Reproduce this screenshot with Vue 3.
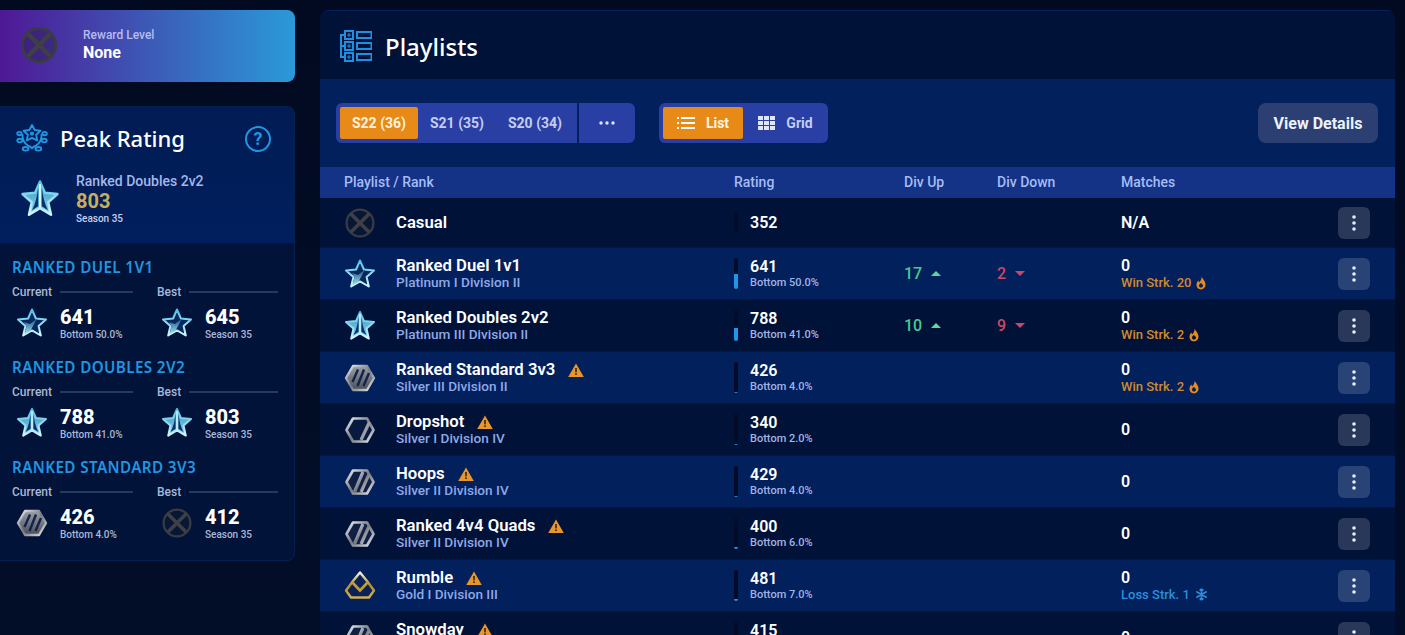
<script setup>
const seasons = ['S22 (36)', 'S21 (35)', 'S20 (34)']

const peakGroups = [
  {
    title: 'Ranked Duel 1v1',
    current: { icon: 'star', value: 641, sub: 'Bottom 50.0%' },
    best: { icon: 'star', value: 645, sub: 'Season 35' }
  },
  {
    title: 'Ranked Doubles 2v2',
    current: { icon: 'spire', value: 788, sub: 'Bottom 41.0%' },
    best: { icon: 'spire', value: 803, sub: 'Season 35' }
  },
  {
    title: 'Ranked Standard 3v3',
    current: { icon: 'silver3', value: 426, sub: 'Bottom 4.0%' },
    best: { icon: 'unranked', value: 412, sub: 'Season 35' }
  }
]

const rows = [
  { name: 'Casual', icon: 'unranked', rating: 352, matches: 'N/A' },
  { name: 'Ranked Duel 1v1', rank: 'Platinum I Division II', icon: 'star', rating: 641, pct: 50, up: 17, down: 2, matches: 0, streak: 'Win Strk. 20', fire: true },
  { name: 'Ranked Doubles 2v2', rank: 'Platinum III Division II', icon: 'spire', rating: 788, pct: 41, up: 10, down: 9, matches: 0, streak: 'Win Strk. 2', fire: true },
  { name: 'Ranked Standard 3v3', rank: 'Silver III Division II', icon: 'silver3', rating: 426, pct: 4, warn: true, matches: 0, streak: 'Win Strk. 2', fire: true },
  { name: 'Dropshot', rank: 'Silver I Division IV', icon: 'silver1', rating: 340, pct: 2, warn: true, matches: 0 },
  { name: 'Hoops', rank: 'Silver II Division IV', icon: 'silver2', rating: 429, pct: 4, warn: true, matches: 0 },
  { name: 'Ranked 4v4 Quads', rank: 'Silver II Division IV', icon: 'silver2', rating: 400, pct: 6, warn: true, matches: 0 },
  { name: 'Rumble', rank: 'Gold I Division III', icon: 'gold', rating: 481, pct: 7, warn: true, matches: 0, streak: 'Loss Strk. 1', fire: false },
  { name: 'Snowday', rank: 'Silver II Division IV', icon: 'silver2', rating: 415, pct: 4, warn: true, matches: 0 }
]
</script>

<template>
  <div class="page">
    <svg class="defs" width="0" height="0">
      <defs>
        <linearGradient id="gPlat" x1="0" y1="0" x2="0" y2="1">
          <stop offset="0" stop-color="#4fc0e6" />
          <stop offset="1" stop-color="#d2f6ff" />
        </linearGradient>
        <linearGradient id="gPlatFill" x1="0" y1="0" x2="0" y2="1">
          <stop offset="0" stop-color="#14507f" />
          <stop offset="1" stop-color="#a9e6f6" />
        </linearGradient>
        <linearGradient id="gSpireFill" x1="0" y1="0" x2="0" y2="1">
          <stop offset="0" stop-color="#2f8fbd" />
          <stop offset="1" stop-color="#8fdcf0" />
        </linearGradient>
        <linearGradient id="gSilver" x1="0" y1="0" x2="1" y2="1">
          <stop offset="0" stop-color="#f0f2f6" />
          <stop offset="0.5" stop-color="#74787f" />
          <stop offset="1" stop-color="#e4e6ea" />
        </linearGradient>
        <linearGradient id="gSilverFill" x1="0" y1="0" x2="0" y2="1">
          <stop offset="0" stop-color="#9a9ea6" />
          <stop offset="1" stop-color="#4b4f5a" />
        </linearGradient>
        <linearGradient id="gGold" x1="0" y1="0" x2="0" y2="1">
          <stop offset="0" stop-color="#f4f2e8" />
          <stop offset="0.5" stop-color="#b8902a" />
          <stop offset="1" stop-color="#d1ae52" />
        </linearGradient>
        <symbol id="unranked" viewBox="0 0 32 32">
          <circle cx="16" cy="16" r="13.4" fill="#1b2130" fill-opacity="0.3" stroke="#3a3c43" stroke-width="2.2" />
          <path d="M7 7 L25 25 M25 7 L7 25" stroke="#3f3f46" stroke-width="3.6" />
        </symbol>
        <symbol id="star" viewBox="0 0 32 32">
          <path d="M16 2.5 L19.9 11.5 L30 12.5 L22.6 19 L24.8 28.5 L16 23.4 L7.2 28.5 L9.4 19 L2 12.5 L12.1 11.5 Z" fill="#08275e" stroke="url(#gPlat)" stroke-width="2" stroke-linejoin="round" />
          <path d="M8.6 27.4 L10.4 19.2 L8 15 L14 17 L21 11.5 L15 22.8 Z" fill="url(#gPlatFill)" />
        </symbol>
        <symbol id="spire" viewBox="0 0 32 32">
          <path d="M16 2 L19.9 11 L30 12 L22.6 18.6 L24.8 28.6 L16 23.4 L7.2 28.6 L9.4 18.6 L2 12 L12.1 11 Z" fill="url(#gSpireFill)" stroke="url(#gPlat)" stroke-width="2" stroke-linejoin="round" />
          <path d="M14.4 7 C14 13 12.6 19 9.6 25 L14.6 21.8 Z M17.6 7 C18 13 19.4 19 22.4 25 L17.4 21.8 Z" fill="#0a2f68" />
          <path d="M16 4 V23" stroke="#d2f6ff" stroke-width="1.6" />
        </symbol>
        <symbol id="silver3" viewBox="0 0 32 32">
          <path d="M9 4 H23 L30 16 L23 28 H9 L2 16 Z" fill="url(#gSilverFill)" stroke="url(#gSilver)" stroke-width="2.4" stroke-linejoin="round" />
          <path d="M8.5 20 L14 7.5 M13.5 24 L20 7.5 M19.5 24 L25 11" stroke="#14234a" stroke-width="2.4" />
        </symbol>
        <symbol id="silver2" viewBox="0 0 32 32">
          <path d="M9 4.5 H23 L29.5 16 L23 27.5 H9 L2.5 16 Z" fill="#0f1f46" stroke="url(#gSilver)" stroke-width="2.6" stroke-linejoin="round" />
          <path d="M10.5 26 L19 6 M17 26 L25 8" stroke="url(#gSilver)" stroke-width="3.2" />
        </symbol>
        <symbol id="silver1" viewBox="0 0 32 32">
          <path d="M9 4.5 H23 L29.5 16 L23 27.5 H9 L2.5 16 Z" fill="#081a40" stroke="url(#gSilver)" stroke-width="2.6" stroke-linejoin="round" />
          <path d="M17 26 L25.5 8" stroke="#9a9ea6" stroke-width="3.2" />
        </symbol>
        <symbol id="gold" viewBox="0 0 32 32">
          <path d="M16 2.5 L23 11 L30 20.5 L25 27.5 H7 L2 20.5 L9 11 Z" fill="#0b2258" stroke="url(#gGold)" stroke-width="2.4" stroke-linejoin="round" />
          <path d="M8 12 L16 20.5 L24 12" fill="none" stroke="#c29c38" stroke-width="2.6" />
        </symbol>
        <symbol id="warn" viewBox="0 0 16 14">
          <path d="M8 0.5 L15.8 14 H0.2 Z" fill="#e8962c" />
          <rect x="7.2" y="5" width="1.6" height="4.4" fill="#33230f" />
          <rect x="7.2" y="10.4" width="1.6" height="1.6" fill="#33230f" />
        </symbol>
        <symbol id="flame" viewBox="0 0 10 14">
          <path d="M5.8 0.5 C6.2 3 9.5 4.6 9.5 8.6 C9.5 11.4 7.6 13.5 5 13.5 C2.4 13.5 0.5 11.4 0.5 8.8 C0.5 6.8 1.4 5.4 2.4 4.4 L3 6.6 C4.4 5.4 5.8 3 5.8 0.5 Z M5 7 C3.8 7.8 3 8.6 3 9.8 C3 10.9 3.9 11.6 5 11.6 C6.1 11.6 7 10.9 7 9.8 C7 8.6 5.8 8 5 7 Z" fill="#e58a1f" fill-rule="evenodd" />
        </symbol>
      </defs>
    </svg>

    <aside class="side">
      <div class="reward">
        <svg class="reward-icon"><use href="#unranked" /></svg>
        <div>
          <div class="reward-label">Reward Level</div>
          <div class="reward-value">None</div>
        </div>
      </div>

      <section class="peak">
        <div class="peak-top">
          <div class="peak-head">
            <svg class="laurel" viewBox="0 0 32 28" fill="none" stroke="#2196e0" stroke-width="1.9" stroke-linejoin="round">
              <path d="M16 1 L18.6 6 L24.4 6.8 L20.2 10.8 L21.2 16.4 L16 13.8 L10.8 16.4 L11.8 10.8 L7.6 6.8 L13.4 6 Z" />
              <circle cx="16" cy="9.6" r="1.2" />
              <path d="M6.5 10 C6 15 8 19 12 21.5 C14 22.6 15.4 23.2 16 24.4 C16.6 23.2 18 22.6 20 21.5 C24 19 26 15 25.5 10" />
              <ellipse cx="3.4" cy="9.6" rx="2.2" ry="1.7" />
              <ellipse cx="28.6" cy="9.6" rx="2.2" ry="1.7" />
              <ellipse cx="3.8" cy="16.6" rx="2.5" ry="1.8" />
              <ellipse cx="28.2" cy="16.6" rx="2.5" ry="1.8" />
              <ellipse cx="9.6" cy="24.8" rx="2.9" ry="1.8" />
              <ellipse cx="22.4" cy="24.8" rx="2.9" ry="1.8" />
            </svg>
            <h2 class="peak-title">Peak Rating</h2>
            <span class="help">?</span>
          </div>
          <div class="peak-main">
            <svg class="peak-star"><use href="#spire" /></svg>
            <div>
              <div class="peak-name">Ranked Doubles 2v2</div>
              <div class="peak-value">803</div>
              <div class="peak-season">Season 35</div>
            </div>
          </div>
        </div>

        <div class="peak-list">
          <div v-for="g in peakGroups" :key="g.title" class="peak-group">
            <h3 class="group-title">{{ g.title }}</h3>
            <div class="group-cols">
              <div v-for="(item, label) in { Current: g.current, Best: g.best }" :key="label" class="group-col">
                <div class="col-label"><span>{{ label }}</span><i></i></div>
                <div class="col-body">
                  <svg class="col-icon"><use :href="'#' + item.icon" /></svg>
                  <div>
                    <div class="col-value">{{ item.value }}</div>
                    <div class="col-sub">{{ item.sub }}</div>
                  </div>
                </div>
              </div>
            </div>
          </div>
        </div>
      </section>
    </aside>

    <main class="panel">
      <header class="panel-head">
        <svg class="panel-icon" viewBox="0 0 32 32" fill="none" stroke="#1f8fe0" stroke-width="2">
          <rect x="5" y="1" width="8" height="8" />
          <rect x="5" y="12" width="8" height="8" />
          <rect x="5" y="23" width="8" height="8" />
          <rect x="17" y="2" width="14.5" height="6" />
          <rect x="17" y="13" width="14.5" height="6" />
          <rect x="17" y="24" width="14.5" height="6" />
          <path d="M5 5 H1 V27 H5 M1 16 H5" />
          <path d="M8 4 h2 v2 H8 Z M8 15 h2 v2 H8 Z M8 26 h2 v2 H8 Z" stroke-width="1" />
        </svg>
        <h1 class="panel-title">Playlists</h1>
      </header>

      <div class="toolbar">
        <div class="seg">
          <button v-for="(s, i) in seasons" :key="s" class="seg-btn" :class="{ active: i === 0 }">{{ s }}</button>
          <span class="seg-split"></span>
          <button class="seg-more">
            <svg width="16" height="4" viewBox="0 0 16 4" fill="#dfe6fb">
              <circle cx="2" cy="2" r="1.7" /><circle cx="8" cy="2" r="1.7" /><circle cx="14" cy="2" r="1.7" />
            </svg>
          </button>
        </div>
        <div class="seg view">
          <button class="view-btn active">
            <svg width="18" height="12" viewBox="0 0 18 12" fill="#fff">
              <rect x="0" y="0" width="2" height="2" /><rect x="4" y="0" width="14" height="2" />
              <rect x="0" y="5" width="2" height="2" /><rect x="4" y="5" width="14" height="2" />
              <rect x="0" y="10" width="2" height="2" /><rect x="4" y="10" width="14" height="2" />
            </svg>
            List
          </button>
          <button class="view-btn">
            <svg width="17" height="14" viewBox="0 0 17 14" fill="#dfe6fb">
              <rect x="0" y="0" width="5" height="4" /><rect x="6" y="0" width="5" height="4" /><rect x="12" y="0" width="5" height="4" />
              <rect x="0" y="5" width="5" height="4" /><rect x="6" y="5" width="5" height="4" /><rect x="12" y="5" width="5" height="4" />
              <rect x="0" y="10" width="5" height="4" /><rect x="6" y="10" width="5" height="4" /><rect x="12" y="10" width="5" height="4" />
            </svg>
            Grid
          </button>
        </div>
        <button class="details">View Details</button>
      </div>

      <div class="row thead">
        <span>Playlist / Rank</span>
        <span>Rating</span>
        <span>Div Up</span>
        <span>Div Down</span>
        <span>Matches</span>
      </div>

      <div v-for="(r, i) in rows" :key="r.name" class="row item" :class="{ alt: i % 2 === 1, first: i === 0 }">
        <div class="cell-name">
          <svg class="rank-icon"><use :href="'#' + r.icon" /></svg>
          <div>
            <div class="name">
              {{ r.name }}
              <svg v-if="r.warn" class="warn"><use href="#warn" /></svg>
            </div>
            <div v-if="r.rank" class="rank">{{ r.rank }}</div>
          </div>
        </div>
        <div class="cell-rating">
          <div class="bar" :class="{ short: !r.rank }">
            <div class="bar-fill" :style="{ height: (r.pct || 0) + '%' }"></div>
          </div>
          <div>
            <div class="value">{{ r.rating }}</div>
            <div v-if="r.pct" class="pct">Bottom {{ r.pct }}.0%</div>
          </div>
        </div>
        <div class="div-up"><template v-if="r.up">{{ r.up }}<i class="tri-up"></i></template></div>
        <div class="div-down"><template v-if="r.down">{{ r.down }}<i class="tri-down"></i></template></div>
        <div>
          <div class="value">{{ r.matches }}</div>
          <div v-if="r.streak" class="streak" :class="{ loss: !r.fire }">
            {{ r.streak }}
            <svg v-if="r.fire" class="flame"><use href="#flame" /></svg>
            <svg v-else class="flake" viewBox="0 0 14 14" fill="none" stroke="#2a8fdc" stroke-width="1.7">
              <path d="M7 0.5 V13.5 M1.4 3.8 L12.6 10.2 M12.6 3.8 L1.4 10.2 M5 1.5 L7 3.5 L9 1.5 M5 12.5 L7 10.5 L9 12.5" />
            </svg>
          </div>
        </div>
        <button class="kebab">
          <svg width="4" height="16" viewBox="0 0 4 16" fill="#e6ecfb">
            <circle cx="2" cy="2" r="1.8" /><circle cx="2" cy="8" r="1.8" /><circle cx="2" cy="14" r="1.8" />
          </svg>
        </button>
      </div>
    </main>
  </div>
</template>

<style>
html,
body {
  background: #020b22;
  overflow: hidden;
}
</style>

<style scoped>
.page {
  display: flex;
  align-items: flex-start;
  gap: 25px;
  height: 635px;
  padding-top: 10px;
  box-sizing: border-box;
  overflow: hidden;
  background: linear-gradient(#010a20, #020d28);
  font-family: Roboto, "Liberation Sans", sans-serif;
  color: #fff;
}

.defs {
  position: absolute;
}

button {
  border: none;
  font-family: inherit;
  cursor: pointer;
}

.side {
  flex: 0 0 295px;
  display: flex;
  flex-direction: column;
  gap: 24px;
}

.reward {
  height: 72px;
  display: flex;
  align-items: center;
  gap: 24px;
  padding: 0 0 2px 19px;
  box-sizing: border-box;
  border-radius: 0 8px 8px 0;
  background: linear-gradient(90deg, #4f1895, #2a9ad8);
}

.reward-icon {
  width: 40px;
  height: 40px;
}

.reward-label {
  font-size: 12px;
  line-height: 15px;
  font-weight: 500;
  color: #b4bdf0;
}

.reward-value {
  font-size: 16px;
  line-height: 20px;
  font-weight: 700;
}

.peak {
  border-radius: 0 8px 8px 0;
  overflow: hidden;
  background: #011338;
  border: 1px solid #04204f;
  border-left: none;
}

.peak-top {
  height: 136px;
  box-sizing: border-box;
  padding: 16px 20px 0 16px;
  background: linear-gradient(#011c54, #011f5e);
}

.peak-head {
  display: flex;
  align-items: center;
  gap: 12px;
}

.laurel {
  width: 32px;
  height: 28px;
}

.peak-title {
  margin: 1px 0 0;
  flex: 1;
  font-family: "Noto Sans", sans-serif;
  font-size: 22px;
  line-height: 28px;
  font-weight: 500;
}

.help {
  width: 22px;
  height: 22px;
  border: 2.5px solid #2196e0;
  border-radius: 50%;
  margin: 2px 3px 0 0;
  display: flex;
  align-items: center;
  justify-content: center;
  color: #2196e0;
  font-size: 18px;
  font-weight: 700;
}

.peak-main {
  display: flex;
  align-items: center;
  gap: 16px;
  margin: 21px 0 0 4px;
}

.peak-star {
  width: 40px;
  height: 40px;
}

.peak-name {
  font-size: 14px;
  line-height: 16px;
  font-weight: 500;
  color: #a3b8e8;
}

.peak-value {
  font-size: 20px;
  line-height: 24px;
  font-weight: 700;
  color: #c9ae5d;
}

.peak-season {
  font-size: 10px;
  line-height: 12px;
  font-weight: 500;
  color: #c4d0ee;
}

.peak-list {
  padding: 14px 16px 19px 12px;
  display: flex;
  flex-direction: column;
  gap: 16px;
}

.group-title {
  margin: 0 0 7px;
  font-family: "Noto Sans", sans-serif;
  font-size: 15.2px;
  line-height: 20px;
  font-weight: 600;
  letter-spacing: 0.4px;
  text-transform: uppercase;
  color: #2196e0;
}

.group-cols {
  display: grid;
  grid-template-columns: 121px 121px;
  gap: 24px;
}

.col-label {
  display: flex;
  align-items: center;
  gap: 8px;
  font-size: 12px;
  line-height: 16px;
  font-weight: 500;
  color: #a8b8d8;
}

.col-label i {
  flex: 1;
  height: 2px;
  background: #26395f;
}

.col-body {
  display: flex;
  align-items: center;
  gap: 12px;
  margin: 5px 0 0 4px;
}

.col-icon {
  width: 32px;
  height: 32px;
}

.col-value {
  font-size: 20px;
  line-height: 24px;
  font-weight: 800;
}

.col-sub {
  font-size: 10px;
  line-height: 12px;
  font-weight: 500;
  color: #a8b8d8;
}

.panel {
  flex: 0 0 1075px;
  border-radius: 8px 8px 0 0;
  background: #011338;
  overflow: hidden;
}

.panel-head {
  height: 69px;
  display: flex;
  align-items: center;
  gap: 13px;
  padding: 2px 0 0 20px;
  background: #011238;
  border-top: 1px solid #04205a;
  box-sizing: border-box;
}

.panel-icon {
  width: 32px;
  height: 32px;
}

.panel-title {
  margin: 0;
  font-family: "Noto Sans", sans-serif;
  font-size: 24px;
  font-weight: 500;
}

.toolbar {
  height: 88px;
  display: flex;
  align-items: center;
  padding: 0 17px 0 16px;
  background: #01205c;
  box-sizing: border-box;
}

.seg {
  height: 40px;
  display: flex;
  align-items: center;
  padding-left: 4px;
  border-radius: 6px;
  background: #2a3fa4;
}

.seg-btn {
  width: 78px;
  height: 32px;
  padding: 0;
  border-radius: 2px;
  background: none;
  color: #c3cef2;
  font-size: 14px;
  font-weight: 700;
}

.seg-btn.active,
.view-btn.active {
  background: #e88a17;
  color: #fff3de;
}

.seg-split {
  width: 2px;
  height: 40px;
  margin-left: 3px;
  background: #01205c;
}

.seg-more {
  width: 56px;
  height: 40px;
  padding: 0;
  display: flex;
  align-items: center;
  justify-content: center;
  background: none;
}

.view {
  margin-left: 24px;
}

.view-btn {
  width: 80px;
  height: 32px;
  padding: 0;
  display: flex;
  align-items: center;
  justify-content: center;
  gap: 11px;
  border-radius: 2px;
  background: none;
  color: #c3cef2;
  font-size: 14px;
  font-weight: 700;
}

.view-btn:last-child {
  width: 85px;
}

.details {
  margin-left: auto;
  width: 120px;
  height: 40px;
  border-radius: 8px;
  background: #2b3f73;
  color: #eef2fb;
  font-size: 16px;
  font-weight: 700;
}

.row {
  display: grid;
  grid-template-columns: 390px 170px 93px 124px 217px 32px;
  align-items: center;
  padding-left: 24px;
}

.thead {
  height: 31px;
  padding-bottom: 2px;
  box-sizing: border-box;
  background: #143286;
  color: #a5bcf4;
  font-size: 14px;
  font-weight: 500;
}

.item {
  height: 52px;
  background: #011238;
  border-bottom: 1px solid #01183f;
  box-sizing: border-box;
}

.item.first {
  height: 50px;
}

.item.alt {
  background: #01205c;
}

.cell-name {
  display: flex;
  align-items: center;
  gap: 20px;
}

.rank-icon {
  width: 32px;
  height: 32px;
}

.name {
  display: flex;
  align-items: center;
  font-size: 16.7px;
  line-height: 18px;
  font-weight: 600;
}

.warn {
  width: 16px;
  height: 14px;
  margin-left: 13px;
}

.rank {
  font-size: 13.6px;
  line-height: 15px;
  font-weight: 500;
  color: #8fa8e6;
}

.cell-rating {
  display: flex;
  align-items: center;
  gap: 12px;
}

.bar {
  width: 4px;
  height: 31px;
  display: flex;
  align-items: flex-end;
  border-radius: 2px;
  background: #020c28;
  overflow: hidden;
}

.bar.short {
  height: 20px;
}

.bar-fill {
  width: 100%;
  background: #2196e8;
}

.value {
  font-size: 16px;
  line-height: 18px;
  font-weight: 600;
}

.pct {
  font-size: 11px;
  line-height: 14px;
  font-weight: 500;
  color: #9fb4ea;
}

.div-up,
.div-down {
  display: flex;
  align-items: center;
  font-size: 16px;
  font-weight: 500;
  color: #49c98a;
}

.div-down {
  color: #c64a66;
}

.tri-up,
.tri-down {
  margin-left: 9px;
  border-left: 5px solid transparent;
  border-right: 5px solid transparent;
}

.tri-up {
  border-bottom: 5px solid #5fd6a0;
}

.tri-down {
  border-top: 5px solid #c64a66;
}

.streak {
  display: flex;
  align-items: center;
  gap: 5px;
  font-size: 13px;
  line-height: 15px;
  font-weight: 500;
  color: #cf8a2e;
}

.streak.loss {
  color: #2a8fdc;
}

.flame {
  width: 10px;
  height: 14px;
}

.flake {
  width: 13px;
  height: 13px;
}

.kebab {
  width: 32px;
  height: 32px;
  padding: 0;
  display: flex;
  align-items: center;
  justify-content: center;
  border-radius: 6px;
  background: rgba(255, 255, 255, 0.16);
}
</style>
